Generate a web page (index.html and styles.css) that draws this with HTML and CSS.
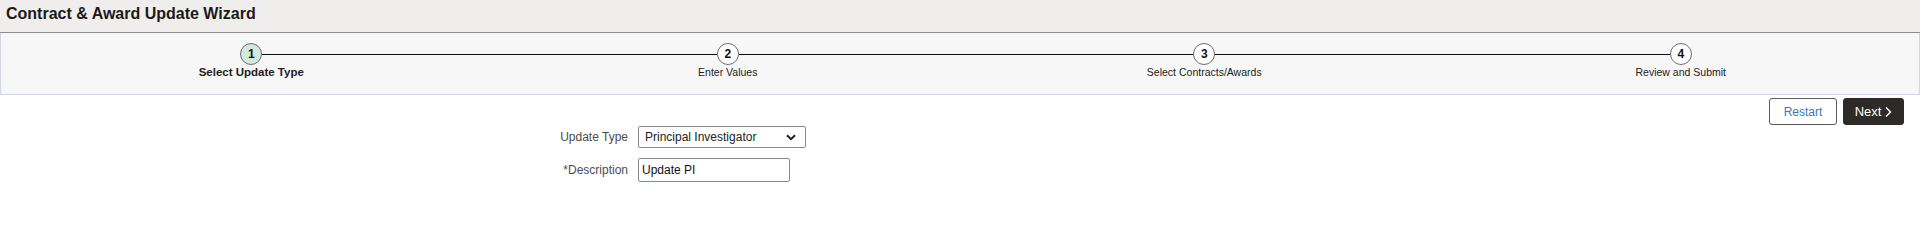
FILE: index.html
```html
<!DOCTYPE html>
<html>

<head>
    <title>Contract &amp; Award Update Wizard</title>
    <link rel="stylesheet" href="styles.css">
</head>

<body>
    <!-- page title -->
    <div class="page-header">
        <h1>Contract &amp; Award Update Wizard</h1>
    </div>

    <!-- wizard steps -->
    <div class="steps">
        <div class="step active">
            <span class="step-num">1</span>
            <span class="step-label">Select Update Type</span>
        </div>
        <div class="step">
            <span class="step-num">2</span>
            <span class="step-label">Enter Values</span>
        </div>
        <div class="step">
            <span class="step-num">3</span>
            <span class="step-label">Select Contracts/Awards</span>
        </div>
        <div class="step last">
            <span class="step-num">4</span>
            <span class="step-label">Review and Submit</span>
        </div>
    </div>

    <!-- buttons -->
    <div class="actions">
        <button class="btn btn-secondary">Restart</button>
        <button class="btn btn-primary">Next
            <svg width="8" height="12" viewBox="0 0 8 12"><path d="M2 1.5 L6.5 6 L2 10.5" fill="none" stroke="#fff" stroke-width="1.4"/></svg>
        </button>
    </div>

    <!-- form -->
    <div class="form">
        <label class="form-label">Update Type</label>
        <div class="select-wrap">
            <select class="form-select">
                <option>Principal Investigator</option>
            </select>
            <svg class="select-arrow" width="10" height="7" viewBox="0 0 10 7"><path d="M1 1.2 L5 5.2 L9 1.2" fill="none" stroke="#222" stroke-width="2"/></svg>
        </div>

        <label class="form-label">*Description</label>
        <div>
            <input class="form-input" type="text" value="Update PI">
        </div>
    </div>
</body>

</html>
```

FILE: styles.css
```css
body {
    margin: 0;
    font-family: "Liberation Sans", Arial, sans-serif;
    color: #222;
    background-color: #fff;
}

/* page title bar */
.page-header {
    background-color: #efeeec;
    height: 33px;
    border-bottom: 1px solid #8c8c8c;
    padding-left: 6px;
    box-sizing: border-box;
}

.page-header h1 {
    margin: 0;
    padding-top: 4px;
    font-size: 16px;
    line-height: 20px;
    font-weight: bold;
    color: #1a1a1a;
}

/* wizard steps */
.steps {
    display: grid;
    grid-template-columns: repeat(4, 1fr);
    background-color: #f7f7f7;
    border: 1px solid #d4d7dd;
    border-top: none;
    padding: 10px 0 14px 12px;
}

.step {
    position: relative;
    display: flex;
    flex-direction: column;
    align-items: center;
}

/* connector line to next step */
.step::after {
    content: "";
    position: absolute;
    left: 50%;
    width: 100%;
    top: 11px;
    height: 1px;
    background-color: #111;
}

.step.last::after {
    display: none;
}

.step-num {
    position: relative;
    z-index: 1;
    width: 20px;
    height: 20px;
    border: 1px solid #6e6e6e;
    border-radius: 50%;
    background-color: #fff;
    font-size: 12px;
    font-weight: bold;
    line-height: 20px;
    text-align: center;
    color: #111;
}

.step.active .step-num {
    background-color: #d1eadb;
}

.step-label {
    font-size: 10.5px;
    line-height: 15px;
    color: #222;
}

.step.active .step-label {
    font-weight: bold;
    font-size: 11.5px;
}

/* buttons row */
.actions {
    display: flex;
    justify-content: flex-end;
    gap: 6px;
    padding: 3px 16px 0 0;
}

.btn {
    height: 27px;
    border-radius: 3px;
    font-family: inherit;
    font-size: 12px;
    cursor: pointer;
    display: flex;
    align-items: center;
    justify-content: center;
    gap: 3px;
    box-sizing: border-box;
}

.btn-secondary {
    width: 68px;
    background-color: #fff;
    border: 1px solid #5a5a5a;
    color: #3b78bb;
}

.btn-primary {
    width: 61px;
    background-color: #2e2a27;
    border: 1px solid #2e2a27;
    color: #fff;
    font-size: 13px;
}

/* form */
.form {
    display: grid;
    grid-template-columns: 108px auto;
    column-gap: 10px;
    row-gap: 10px;
    align-items: center;
    margin: 1px 0 0 520px;
    justify-content: start;
}

.form-label {
    text-align: right;
    font-size: 12px;
    color: #4d4d4d;
}

.select-wrap {
    position: relative;
    width: 168px;
}

.form-select {
    appearance: none;
    width: 168px;
    height: 22px;
    border: 1px solid #8a8a8a;
    border-radius: 2px;
    background-color: #fff;
    padding: 0 0 0 6px;
    font-family: inherit;
    font-size: 12px;
    color: #222;
    display: block;
}

.select-arrow {
    position: absolute;
    right: 10px;
    top: 8px;
}

.form-input {
    width: 152px;
    height: 24px;
    box-sizing: border-box;
    border: 1px solid #8a8a8a;
    border-radius: 2px;
    padding: 0 3px;
    font-family: inherit;
    font-size: 12px;
    color: #111;
    display: block;
}
```
